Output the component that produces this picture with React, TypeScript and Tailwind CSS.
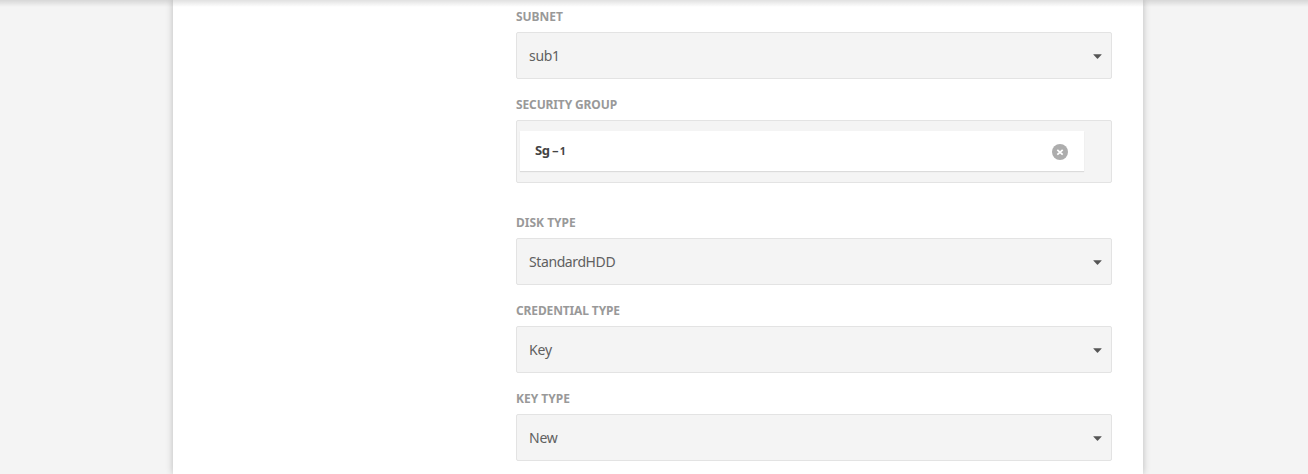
import React from "react";

function Label({ children, className }: { children: string; className: string }) {
  return (
    <div className={`h-[16px] whitespace-nowrap text-[12px] leading-[16px] font-bold text-[#999999] ${className}`}>{children}</div>
  );
}

function Select({ value, className }: { value: string; className: string }) {
  return (
    <div className="mt-[7px] flex h-[47px] items-center justify-between rounded-[2px] border border-[#e3e3e3] bg-[#f4f4f4] pr-[9px] pl-[12px]">
      <span className={`text-[14px] leading-[20px] text-[#606060] ${className}`}>{value}</span>
      <svg width="9" height="5" viewBox="0 0 9 5" className="mt-[2px]" fill="#555555">
        <path d="M0.7 0.2h7.6q.5.2.2.6L5 4.5q-.5.4-1 0L.5.8Q.2.4.7.2z" />
      </svg>
    </div>
  );
}

export default function App() {
  return (
    <div className="relative h-[474px] w-full overflow-hidden bg-[#f4f4f4] pl-[173px] font-['Noto_Sans','Open_Sans',sans-serif]">
      <main className="h-full w-[970px] bg-white pr-[31px] pl-[343px] shadow-[0_0_7px_rgba(0,0,0,0.24)]">
        <div className="flex flex-col pt-[9px]">
          <Label className="tracking-[-0.05px]">SUBNET</Label>
          <Select value="sub1" className="tracking-[-0.3px]" />
          <div className="h-[18px]" />
          <Label className="tracking-[-0.13px]">SECURITY GROUP</Label>
          <div className="mt-[7px] h-[63px] rounded-[2px] border border-[#e3e3e3] bg-[#f4f4f4] pt-[10px] pl-[3px]">
            <div className="flex h-[40px] w-[564px] items-center justify-between bg-white pr-[16px] pl-[15px] shadow-[0_1px_1px_rgba(0,0,0,0.1)]">
              <span className="mb-[2px] flex items-baseline text-[13px] leading-[20px] font-bold text-[#444444]">
                <span className="tracking-[-0.3px]">Sg</span>
                <span className="mx-[2px] inline-block w-[6px] origin-left scale-x-[1.6] scale-y-[0.8]">-</span>
                <span className="text-[10.5px]">1</span>
              </span>
              <svg width="16" height="16" viewBox="0 0 16 16" className="mt-[2px]">
                <circle cx="8" cy="8" r="8" fill="#adadad" />
                <path d="M5.3 5.8l5.4 4.8M10.7 5.8l-5.4 4.8" stroke="white" strokeWidth="1.8" />
              </svg>
            </div>
          </div>
          <div className="h-[32px]" />
          <Label className="tracking-[0px]">DISK TYPE</Label>
          <Select value="StandardHDD" className="tracking-[-0.4px]" />
          <div className="h-[18px]" />
          <Label className="tracking-[-0.13px]">CREDENTIAL TYPE</Label>
          <Select value="Key" className="tracking-[-0.2px]" />
          <div className="h-[18px]" />
          <Label className="tracking-[0px]">KEY TYPE</Label>
          <Select value="New" className="tracking-[-0.2px]" />
        </div>
      </main>
      <div className="pointer-events-none absolute inset-x-0 top-0 h-[7px] bg-linear-to-b from-black/12 to-transparent" />
    </div>
  );
}
